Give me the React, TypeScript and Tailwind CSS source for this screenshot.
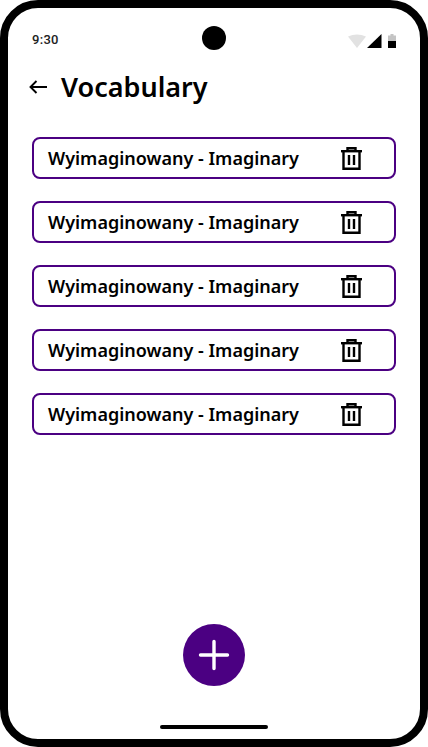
import React from "react";

const words = [1, 2, 3, 4, 5];

const TrashIcon = () => (
  <svg width="21" height="23" viewBox="0 0 21 23" fill="none" stroke="#000" strokeWidth="2.4">
    <path d="M0 4.2h21" />
    <path d="M6.5 4V1.2h8V4" />
    <path d="M2.5 4.2v17.6h16V4.2" />
    <path d="M8 8v10M13 8v10" />
  </svg>
);

const App: React.FC = () => {
  return (
    <div className="w-[428px] h-[747px] bg-white font-['Noto_Sans',sans-serif] text-black overflow-hidden">
      <div className="h-full border-8 border-black rounded-[38px] flex flex-col items-center">
        {/* Status bar */}
        <div className="w-full h-[42px] mt-[11px] px-6 flex items-center justify-between relative">
          <span className="text-[13px] font-medium font-['Roboto',sans-serif] tracking-[0.3px] text-[#222]">9:30</span>
          <div className="absolute left-[194px] top-[7px] w-6 h-6 rounded-full bg-black" />
          <div className="flex items-center gap-[2px] mt-[2px]">
            <svg width="18" height="14" viewBox="0 0 18 14">
              <path d="M0 2.5 Q9 -1.5 18 2.5 L9 14 Z" fill="#e2e2e2" />
            </svg>
            <svg width="15" height="14" viewBox="0 0 15 14" className="ml-[-1px]">
              <path d="M14.5 0V14H0Z" fill="#000" />
            </svg>
            <svg width="8" height="14" viewBox="0 0 8 14" className="ml-[4px]">
              <path d="M2.5 0h3v1.5H8V7H0V1.5h2.5z" fill="#c4c4c4" />
              <path d="M0 7h8v7H0z" fill="#000" />
            </svg>
          </div>
        </div>

        {/* Header */}
        <div className="w-full h-[36px] mt-[8px] pl-[21px] flex items-center gap-[14px]">
          <svg width="18" height="14" viewBox="0 0 18 14" fill="none" stroke="#000" strokeWidth="1.9">
            <path d="M18 7H1.5M7.5 1 1.5 7l6 6" />
          </svg>
          <h1 className="text-[27px] font-semibold leading-9">Vocabulary</h1>
        </div>

        {/* Word list */}
        <div className="w-[364px] mt-[32px] flex flex-col gap-[22px]">
          {words.map((w) => (
            <div
              key={w}
              className="h-[42px] border-2 border-[#4b0082] rounded-lg pl-[14px] pr-[32px] flex items-center justify-between"
            >
              <span className="text-[18px] font-semibold">Wyimaginowany - Imaginary</span>
              <TrashIcon />
            </div>
          ))}
        </div>

        <div className="flex-1" />

        {/* Add button */}
        <button className="w-[62px] h-[62px] rounded-full bg-[#4b0082] flex items-center justify-center">
          <svg width="32" height="32" viewBox="0 0 32 32" fill="none" stroke="#fff" strokeWidth="3.4" strokeLinecap="round">
            <path d="M16 2.5v27M2.5 16h27" />
          </svg>
        </button>

        {/* Home indicator */}
        <div className="w-[108px] h-1 rounded-full bg-black mt-[39px] mb-[10px]" />
      </div>
    </div>
  );
};

export default App;
